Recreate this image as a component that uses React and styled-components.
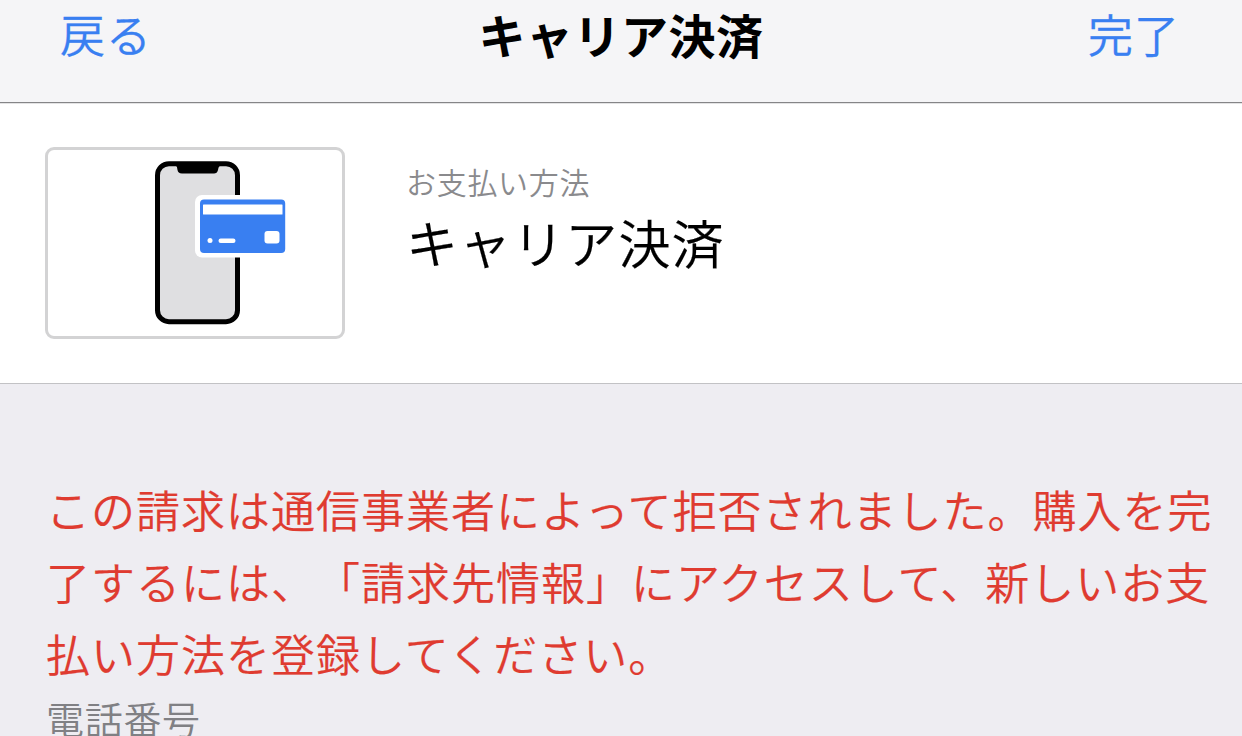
import React from 'react';
import styled, { createGlobalStyle } from 'styled-components';

const MESSAGE = [
  'この請求は通信事業者によって拒否されました。購入を完',
  '了するには、「請求先情報」にアクセスして、新しいお支',
  '払い方法を登録してください。',
];

function PhoneCardIcon() {
  return (
    <svg width="134" height="166" viewBox="0 0 134 166">
      <rect x="3.5" y="3.7" width="80" height="158" rx="11.5" fill="#dfdfe1" stroke="#000" strokeWidth="5" />
      <path d="M22 3H66V6C64.500 6.500 64.500 8 64 10C63.500 12.500 62 13.500 60 13.500H28C25 13.500 24 12 23.500 10C23 7 23 6.500 22 6Z" fill="#000" />
      <rect x="41" y="35" width="94" height="62.500" rx="7" fill="#fff" />
      <rect x="46" y="39.500" width="85.200" height="53.500" rx="4" fill="#397ff1" />
      <rect x="49" y="44.500" width="79.500" height="10" rx="0.5" fill="#fff" />
      <circle cx="56" cy="80.500" r="2.500" fill="#fff" />
      <rect x="64.500" y="78.500" width="17" height="4.500" rx="2.200" fill="#fff" />
      <rect x="110.500" y="71" width="15" height="12.500" rx="3" fill="#fff" />
    </svg>
  );
}

function App() {
  return (
    <Root>
      <GlobalStyle />
      <NavBar>
        <NavButton>戻る</NavButton>
        <NavTitle>キャリア決済</NavTitle>
        <NavButton align="right">完了</NavButton>
      </NavBar>
      <MethodRow>
        <Thumbnail>
          <PhoneCardIcon />
        </Thumbnail>
        <MethodText>
          <MethodLabel>お支払い方法</MethodLabel>
          <MethodName>キャリア決済</MethodName>
        </MethodText>
      </MethodRow>
      <Details>
        <ErrorMessage>
          {MESSAGE.map(line => <ErrorLine key={line}>{line}</ErrorLine>)}
        </ErrorMessage>
        <SectionTitle>電話番号</SectionTitle>
      </Details>
    </Root>
  );
}

const GlobalStyle = createGlobalStyle`
  body {
    margin: 0;
    overflow: hidden;
  }
`;
const Root = styled.div`
  height: 736px;
  overflow: hidden;
  box-sizing: border-box;
  display: flex;
  flex-direction: column;
  background-color: #eeedf2;
  font-family: 'Noto Sans CJK JP', sans-serif;
  font-weight: 350;
  text-spacing-trim: space-all;
`;
const NavBar = styled.header`
  height: 104px;
  flex-shrink: 0;
  box-sizing: border-box;
  padding: 0 62px 0 60px;
  display: grid;
  grid-template-columns: 1fr auto 1fr;
  align-items: start;
  background-color: #f5f5f7;
  border-bottom: 1px solid #e3e3e4;
  box-shadow: inset 0 -1px #858587;
`;
const NavButton = styled.button`
  border: none;
  padding: 0;
  background: none;
  color: #397ff1;
  font-family: inherit;
  font-weight: inherit;
  font-size: 45px;
  letter-spacing: 1px;
  line-height: 67px;
  -webkit-text-stroke: 0.3px;
  text-align: ${props => props.align || "left"};
`;
const NavTitle = styled.h1`
  margin: 0;
  padding-left: 2px;
  font-size: 47px;
  letter-spacing: 0.5px;
  font-weight: 700;
  line-height: 67px;
`;
const MethodRow = styled.section`
  height: 280px;
  flex-shrink: 0;
  box-sizing: border-box;
  padding: 43px 45px;
  display: flex;
  gap: 61px;
  background-color: #fff;
  border-bottom: 1px solid #c2c2c5;
`;
const Thumbnail = styled.div`
  width: 300px;
  height: 192px;
  box-sizing: border-box;
  padding: 10px 0 0 106px;
  border: 3px solid #d3d3d4;
  border-radius: 9px;
`;
const MethodText = styled.div`
  padding-top: 13px;
`;
const MethodLabel = styled.div`
  color: #8a8a8d;
  font-size: 30px;
  letter-spacing: 0.7px;
  line-height: 43px;
`;
const MethodName = styled.div`
  font-size: 52px;
  letter-spacing: 1.1px;
  line-height: 77px;
  -webkit-text-stroke: 0.2px;
`;
const Details = styled.section`
  padding: 89px 0 0 46px;
`;
const ErrorMessage = styled.p`
  margin: 0;
  color: #df3b30;
  font-size: 44px;
  letter-spacing: 1px;
  line-height: 72px;
  -webkit-text-stroke: 0.2px;
`;
const ErrorLine = styled.span`
  display: block;
  white-space: nowrap;
`;
const SectionTitle = styled.h2`
  margin: 0;
  color: #808084;
  font-size: 38px;
  letter-spacing: 0.7px;
  font-weight: inherit;
  line-height: 58px;
`;

export default App;
